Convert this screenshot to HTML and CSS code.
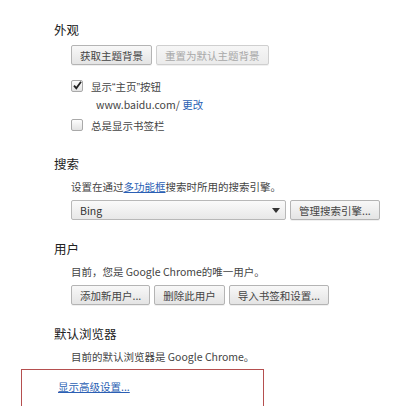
FILE: index.html
```
<!DOCTYPE html>
<html>
  <head>
    <meta charset="utf-8" />
    <title>设置</title>
    <link rel="stylesheet" href="styles.css">
  </head>
  <body>
    <div class="settings">
      <!-- 外观 -->
      <div class="section">
        <h3 class="section-title">外观</h3>
        <div class="section-body">
          <div class="button-row">
            <button class="btn">获取主题背景</button>
            <button class="btn" disabled>重置为默认主题背景</button>
          </div>
          <label class="check-row first">
            <span class="checkbox checked">
              <svg width="11" height="11" viewBox="0 0 11 11"><path d="M2 5.6 L4.3 8.2 L9 1.8" fill="none" stroke="#222" stroke-width="1.8" /></svg>
            </span>
            <span>显示<span class="quote">“</span>主页<span class="quote">”</span>按钮</span>
          </label>
          <div class="home-url">www.baidu.com/ <a href="#" class="plain-link">更改</a></div>
          <label class="check-row">
            <span class="checkbox"></span>
            <span>总是显示书签栏</span>
          </label>
        </div>
      </div>

      <!-- 搜索 -->
      <div class="section">
        <h3 class="section-title">搜索</h3>
        <div class="section-body">
          <div class="desc">设置在通过<a href="#">多功能框</a>搜索时所用的搜索引擎。</div>
          <div class="button-row">
            <div class="select">
              <span>Bing</span>
              <span class="select-arrow"></span>
            </div>
            <button class="btn">管理搜索引擎...</button>
          </div>
        </div>
      </div>

      <!-- 用户 -->
      <div class="section">
        <h3 class="section-title">用户</h3>
        <div class="section-body">
          <div class="desc">目前，您是 Google Chrome的唯一用户。</div>
          <div class="button-row">
            <button class="btn">添加新用户...</button>
            <button class="btn">删除此用户</button>
            <button class="btn">导入书签和设置...</button>
          </div>
        </div>
      </div>

      <!-- 默认浏览器 -->
      <div class="section">
        <h3 class="section-title">默认浏览器</h3>
        <div class="section-body">
          <div class="desc">目前的默认浏览器是 Google Chrome。</div>
        </div>
      </div>
    </div>

    <div class="advanced">
      <a href="#">显示高级设置...</a>
    </div>
  </body>
</html>
```

FILE: styles.css
```
html {
  overflow: hidden;
}

body {
  margin: 0;
  padding: 0;
  background-color: #fff;
  color: #444;
  font-family: "Noto Sans CJK SC", "Liberation Sans", sans-serif;
  font-size: 10.5px;
}

a {
  color: #2b5fb4;
  text-decoration: underline;
}

.plain-link {
  text-decoration: none;
}

.quote {
  font-family: "Liberation Sans", sans-serif;
}

/* Settings list */
.settings {
  padding: 22px 0 0 54px;
}

.section {
  margin-bottom: 21px;
}

.section-title {
  margin: 0;
  font-size: 12.5px;
  font-weight: normal;
  line-height: 16px;
  color: #222;
}

.section-body {
  padding-left: 17px;
  padding-top: 7px;
}

.desc {
  line-height: 16px;
  margin-bottom: 5px;
}

/* Buttons */
.button-row {
  display: flex;
  gap: 4px;
}

.btn {
  height: 20px;
  padding: 0 8px;
  font-family: inherit;
  font-size: 10.5px;
  color: #444;
  background: linear-gradient(#f8f8f8, #e4e4e4);
  border: 1px solid #b4b4b4;
  border-radius: 2px;
  box-shadow: 0 1px 0 rgba(0, 0, 0, 0.06);
}

.btn:disabled {
  color: #a8a8a8;
  border-color: #cfcfcf;
  background: linear-gradient(#f6f6f6, #ebebeb);
}

/* Checkboxes */
.check-row {
  display: flex;
  align-items: center;
  gap: 8px;
  height: 20px;
}

.check-row.first {
  margin-top: 11px;
}

.checkbox {
  width: 10px;
  height: 10px;
  border: 1px solid #a9a9a9;
  border-radius: 2px;
  background: linear-gradient(#fdfdfd, #e2e2e2);
  position: relative;
}

.checkbox svg {
  position: absolute;
  left: 0;
  top: -1px;
}

.home-url {
  line-height: 18px;
  padding-left: 25px;
  margin-bottom: 1px;
}

/* Select */
.select {
  width: 200px;
  height: 18px;
  padding: 0 5px 0 8px;
  display: flex;
  align-items: center;
  justify-content: space-between;
  border: 1px solid #b8b8b8;
  border-radius: 2px;
  background: linear-gradient(#fafafa, #e8e8e8);
  color: #333;
}

.select-arrow {
  width: 0;
  height: 0;
  border-left: 4px solid transparent;
  border-right: 4px solid transparent;
  border-top: 5px solid #333;
}

/* Advanced link box */
.advanced {
  margin: -17px 0 0 21px;
  width: 243px;
  height: 37px;
  border: 1.5px solid #b54f4f;
  border-bottom: none;
  padding: 9px 0 0 36px;
  box-sizing: border-box;
  line-height: 16px;
}
```
